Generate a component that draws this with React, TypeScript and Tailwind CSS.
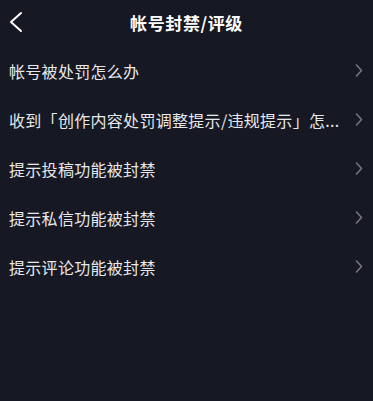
import React from 'react';

const items = [
  '帐号被处罚怎么办',
  '收到「创作内容处罚调整提示/违规提示」怎...',
  '提示投稿功能被封禁',
  '提示私信功能被封禁',
  '提示评论功能被封禁',
];

const BackIcon = () => (
  <svg width="14" height="22" viewBox="0 0 14 22" fill="none">
    <polyline
      points="12,2 2,11 12,20"
      stroke="white"
      strokeWidth="2"
      strokeLinecap="round"
      strokeLinejoin="round"
    />
  </svg>
);

const Arrow = () => (
  <svg width="8" height="13" viewBox="0 0 8 13" fill="none" className="shrink-0">
    <polyline
      points="1.5,1 6.5,6.5 1.5,12"
      stroke="#76777e"
      strokeWidth="1.6"
      strokeLinecap="round"
      strokeLinejoin="round"
    />
  </svg>
);

const App = () => {
  return (
    <div
      className="w-[373px] h-[401px] bg-[#161823] text-[#e8e8ea] overflow-hidden"
      style={{ fontFamily: '"Noto Sans CJK SC", "Noto Sans", sans-serif' }}
    >
      {/* header */}
      <div className="relative h-[46px] flex items-center justify-center">
        <button className="absolute left-[9px] top-[11px]">
          <BackIcon />
        </button>
        <h1 className="text-[17px] font-bold text-white tracking-[0.6px]">帐号封禁/评级</h1>
      </div>

      {/* list */}
      <div className="flex flex-col">
        {items.map((item) => (
          <div key={item} className="h-[49px] flex items-center pl-[9px] pr-[10px]">
            <span className="flex-1 min-w-0 truncate text-[16px] tracking-[0.3px]">{item}</span>
            <Arrow />
          </div>
        ))}
      </div>
    </div>
  );
};

export default App;
